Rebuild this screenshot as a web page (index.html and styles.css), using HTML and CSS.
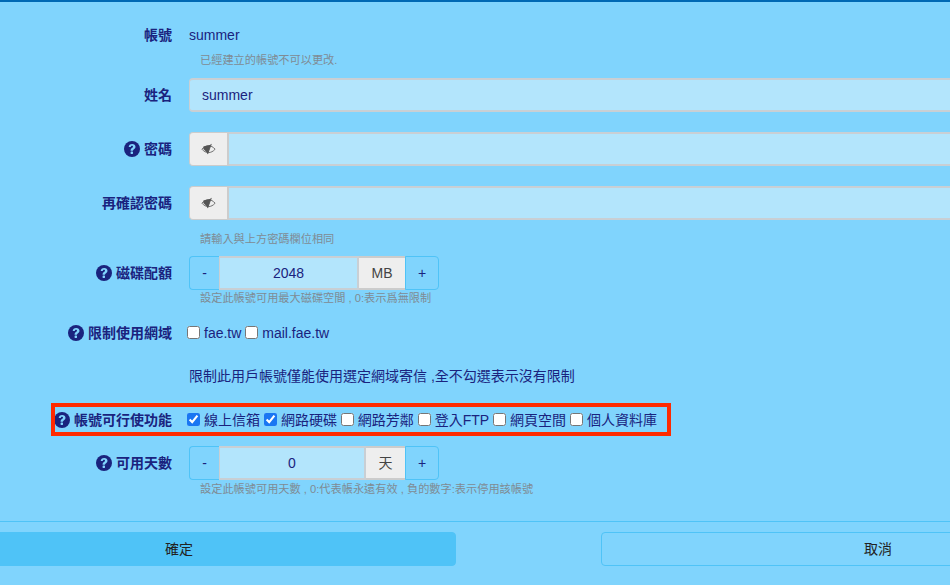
FILE: index.html
```html
<!DOCTYPE html>
<html lang="zh-Hant">
<head>
<meta charset="utf-8">
<title>帳號</title>
<link rel="stylesheet" href="styles.css">
</head>
<body>
<svg class="defs" width="0" height="0" aria-hidden="true">
  <symbol id="q" viewBox="0 0 16 16">
    <circle cx="8" cy="8" r="8" fill="#1a237e"/>
    <path d="M4.700 6.100C4.800 4.100 6.200 2.900 8.200 2.900c2 0 3.300 1.100 3.300 2.800 0 1.300-.7 1.900-1.500 2.500-.7.5-1 .8-1 1.500H6.600c0-1.300.5-2 1.300-2.600.6-.4 1.100-.8 1.100-1.400 0-.6-.4-1-1-1-.7 0-1.100.5-1.200 1.400H4.700z" fill="#80d4fd"/>
    <rect x="6.600" y="10.500" width="2.400" height="2.400" rx=".4" fill="#80d4fd"/>
  </symbol>
  <symbol id="eye" viewBox="0 0 16 12">
    <path d="M1 6.200C3 3.800 5.400 2.500 8 2.500s5 1.300 7 3.700c-2 2.400-4.400 3.600-7 3.600S3 8.600 1 6.200z" fill="none" stroke="#666" stroke-width="1"/>
    <path d="M2.500 3.300 10.500 1.500 7.300 11 5 8.500 2.500 6z" fill="#555"/>
    <path d="M11 .6 7 11.400" stroke="#555" stroke-width="1" fill="none"/>
  </symbol>
</svg>
<main class="page">
  <form class="form">
    <div class="row row-account">
      <div class="label">帳號</div>
      <div class="value">summer</div>
    </div>
    <p class="hint hint-account">已經建立的帳號不可以更改.</p>

    <div class="row row-field">
      <label class="label">姓名</label>
      <div class="field"><input class="input input-name" type="text" value="summer"></div>
    </div>

    <div class="row row-field">
      <label class="label"><svg class="help"><use href="#q"/></svg>密碼</label>
      <div class="field">
        <span class="addon eye"><svg class="eye-icon"><use href="#eye"/></svg></span>
        <input class="input input-grow" type="password">
      </div>
    </div>

    <div class="row row-field">
      <label class="label">再確認密碼</label>
      <div class="field">
        <span class="addon eye"><svg class="eye-icon"><use href="#eye"/></svg></span>
        <input class="input input-grow" type="password">
      </div>
    </div>
    <p class="hint hint-confirm">請輸入與上方密碼欄位相同</p>

    <div class="row row-num">
      <label class="label"><svg class="help"><use href="#q"/></svg>磁碟配額</label>
      <div class="spinner">
        <span class="step step-left">-</span>
        <span class="num num-mb">2048</span>
        <span class="addon unit unit-mb">MB</span>
        <span class="step step-right">+</span>
      </div>
    </div>
    <p class="hint hint-quota">設定此帳號可用最大磁碟空間 , 0:表示爲無限制</p>

    <div class="row row-check row-domain">
      <div class="label"><svg class="help"><use href="#q"/></svg>限制使用網域</div>
      <div class="checks">
        <label class="check"><input type="checkbox">fae.tw</label>
        <label class="check"><input type="checkbox">mail.fae.tw</label>
      </div>
    </div>
    <p class="note">限制此用戶帳號僅能使用選定網域寄信 ,全不勾選表示沒有限制</p>

    <div class="row row-check row-features">
      <span class="mark" aria-hidden="true"></span>
      <div class="label"><svg class="help"><use href="#q"/></svg>帳號可行使功能</div>
      <div class="checks">
        <label class="check"><input type="checkbox" checked>線上信箱</label>
        <label class="check"><input type="checkbox" checked>網路硬碟</label>
        <label class="check"><input type="checkbox">網路芳鄰</label>
        <label class="check"><input type="checkbox">登入FTP</label>
        <label class="check"><input type="checkbox">網頁空間</label>
        <label class="check"><input type="checkbox">個人資料庫</label>
      </div>
    </div>

    <div class="row row-num row-days">
      <label class="label"><svg class="help"><use href="#q"/></svg>可用天數</label>
      <div class="spinner">
        <span class="step step-left">-</span>
        <span class="num num-day">0</span>
        <span class="addon unit unit-day">天</span>
        <span class="step step-right">+</span>
      </div>
    </div>
    <p class="hint hint-days">設定此帳號可用天數 , 0:代表帳永遠有效 , 負的數字:表示停用該帳號</p>
  </form>
  <footer class="actions">
    <button class="btn btn-ok" type="button">確定</button>
    <button class="btn btn-cancel" type="button">取消</button>
  </footer>
</main>
</body>
</html>
```

FILE: styles.css
```css
* { box-sizing: border-box; }
html, body { margin: 0; height: 100%; overflow: hidden; }
body {
  width: 950px;
  height: 585px;
  background: #80d4fd;
  color: #1a237e;
  font: 14px/20px "Liberation Sans", "Noto Sans CJK TC", sans-serif;
}
.defs { position: absolute; }
.page { border-top: 2px solid #0069b4; height: 585px; overflow: hidden; }
.form { padding-top: 23px; }
.row { display: flex; align-items: center; gap: 17px; position: relative; }
.label {
  flex: 0 0 172px;
  display: flex;
  justify-content: flex-end;
  align-items: center;
  gap: 4px;
  font-weight: 700;
  white-space: nowrap;
}
.help { width: 16px; height: 16px; flex: none; }
.hint {
  margin: 0 0 0 200px;
  font-size: 11.2px;
  line-height: 14px;
  color: #7f8b94;
  white-space: nowrap;
}
.hint-account { margin-top: 8px; height: 14px; }
.row-field { height: 34px; margin-bottom: 20px; }
.hint-account + .row-field { margin-top: 11px; }
.field { display: flex; width: 900px; height: 34px; flex: none; }
.input {
  height: 34px;
  width: 100%;
  padding: 0 12px;
  background: #b3e5fc;
  border: 2px solid #c9cfd4;
  border-width: 2px 0 2px 1px;
  border-radius: 4px 0 0 4px;
  color: #1a237e;
  font: inherit;
  outline: 0;
}
.input-grow { border-left: 0; border-radius: 0; }
.addon {
  display: flex;
  align-items: center;
  justify-content: center;
  background: #eee;
  border: 1px solid #ccc;
  color: #444;
  flex: none;
}
.eye { width: 40px; height: 34px; border-radius: 4px 0 0 4px; border-right-width: 2px; }
.eye-icon { width: 15px; height: 12px; }
.hint-confirm { margin-top: -8px; }
.row-num { height: 34px; margin-top: 10px; }
.spinner { display: flex; width: 250px; height: 34px; flex: none; }
.step {
  display: flex;
  align-items: center;
  justify-content: center;
  width: 30px;
  border: 1px solid #4fc3f7;
  flex: none;
}
.step-left { border-right: 0; border-radius: 4px 0 0 4px; }
.step-right { width: 34px; border-radius: 0 4px 4px 0; }
.num {
  flex: 1;
  display: flex;
  align-items: center;
  justify-content: center;
  background: #b3e5fc;
  border: 2px solid #c9cfd4;
  border-width: 2px 2px 2px 1px;
}
.unit { height: 34px; border-width: 2px 0 2px 0; }
.unit-mb { width: 46px; }
.unit-day { width: 39px; }
.hint-quota { margin-top: 1px; }
.row-check { height: 20px; }
.row-domain { margin-top: 18px; }
.checks { display: flex; gap: 3.9px; margin-left: -2px; white-space: nowrap; }
.check { display: flex; align-items: center; gap: 4px; }
.check input {
  margin: 0;
  width: 13px;
  height: 13px;
  accent-color: #1976f2;
  position: relative;
  top: -1px;
}
.note { margin: 23px 0 0 189px; }
.row-features { margin-top: 24px; }
.mark {
  position: absolute;
  left: 51px;
  top: -7px;
  width: 620px;
  height: 33px;
  border: 4px solid #ff2a00;
  pointer-events: none;
}
.row-days { margin-top: 16px; }
.hint-days { margin-top: 2px; }
.actions {
  display: flex;
  gap: 145px;
  margin-top: 25px;
  padding-top: 10px;
  border-top: 1px solid #4fc3f7;
}
.btn {
  flex: none;
  width: 554px;
  height: 34px;
  border: 1px solid #4fc3f7;
  border-radius: 4px;
  color: #222;
  font: 14px/20px "Liberation Sans", "Noto Sans CJK TC", sans-serif;
  background: transparent;
}
.btn-ok { background: #4fc3f7; margin-left: -98px; }
```
